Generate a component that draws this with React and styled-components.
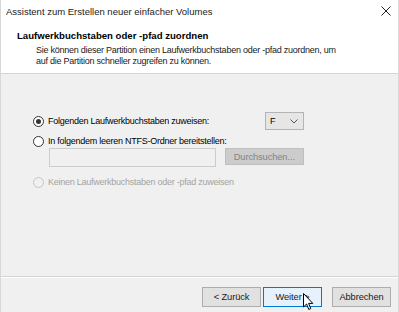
import React from 'react';
import styled, { createGlobalStyle } from 'styled-components';

const GlobalStyle = createGlobalStyle`
  html, body {
    margin: 0;
    padding: 0;
    background: #f0f0f0;
  }
  body {
    font-family: "Liberation Sans", Arial, sans-serif;
    font-size: 9px;
    letter-spacing: -0.25px;
    color: #000000;
  }
`;

const Window = styled.div`
  width: 399px;
  height: 312px;
  display: flex;
  flex-direction: column;
  background: #f0f0f0;
  box-sizing: border-box;
  border-left: 1px solid #d8d8d8;
  border-right: 1px solid #d8d8d8;
  position: relative;
  overflow: hidden;
`;

const TitleBar = styled.div`
  height: 22px;
  flex: none;
  display: flex;
  align-items: center;
  justify-content: space-between;
  padding: 0 7px 0 5px;
  background: #ffffff;
  font-size: 9.5px;
  letter-spacing: 0;
  color: #1a1a1a;
`;

const CloseIcon = styled.svg`
  width: 10px;
  height: 10px;
`;

const Header = styled.div`
  height: 52px;
  flex: none;
  box-sizing: border-box;
  background: #ffffff;
  padding: 8px 0 0 16px;
  border-bottom: 1px solid #d4d4d4;
`;

const HeaderTitle = styled.div`
  font-weight: bold;
  font-size: 9.6px;
  letter-spacing: 0;
  line-height: 12px;
`;

const HeaderText = styled.div`
  padding-left: 19px;
  margin-top: 3px;
  line-height: 10.5px;
  font-size: 9px;
  letter-spacing: -0.25px;
  color: #1a1a1a;
`;

const Content = styled.div`
  flex: 1;
  display: flex;
  flex-direction: column;
  padding: 38px 94px 0 32px;
  border-bottom: 1px solid #d4d4d4;
  box-shadow: 0 1px 0 #ffffff;
`;

const OptionRow = styled.div`
  display: flex;
  align-items: center;
  height: ${p => p.$h || 14}px;
  margin-top: ${p => p.$mt || 0}px;
  color: ${p => (p.$disabled ? '#a3a3a3' : '#000000')};
`;

const Radio = styled.span`
  width: 9px;
  height: 9px;
  border-radius: 50%;
  border: 1px solid ${p => (p.$disabled ? '#c4c4c4' : '#333333')};
  background: ${p => (p.$disabled ? '#f0f0f0' : '#ffffff')};
  display: flex;
  align-items: center;
  justify-content: center;
  margin-right: 4px;
  flex: none;

  &::after {
    content: '';
    width: 5px;
    height: 5px;
    border-radius: 50%;
    background: #333333;
    display: ${p => (p.$checked ? 'block' : 'none')};
  }
`;

const Select = styled.div`
  margin-left: auto;
  width: 39px;
  height: 18px;
  box-sizing: border-box;
  border: 1px solid #b4b4b4;
  background: #e6e6e6;
  display: flex;
  align-items: center;
  justify-content: space-between;
  padding: 0 5px 0 4px;
`;

const PathRow = styled.div`
  display: flex;
  align-items: flex-start;
  padding-left: 16px;
  gap: 9px;
  height: 19px;
`;

const PathInput = styled.div`
  width: 168px;
  height: 19px;
  box-sizing: border-box;
  border: 1px solid #cccccc;
  background: #f0f0f0;
`;

const Button = styled.div`
  width: ${p => p.$w || 59}px;
  height: ${p => p.$hgt || 20}px;
  box-sizing: border-box;
  display: flex;
  align-items: center;
  justify-content: center;
  border: 1px solid ${p => (p.$primary ? '#0078d7' : p.$disabled ? '#bfbfbf' : '#adadad')};
  background: ${p => (p.$primary ? '#e5f1fb' : p.$disabled ? '#cccccc' : '#e1e1e1')};
  color: ${p => (p.$disabled ? '#838383' : '#1a1a1a')};
  font-size: 9.3px;
  letter-spacing: -0.1px;
`;

const Footer = styled.div`
  height: 34px;
  flex: none;
  box-sizing: border-box;
  margin-top: 1px;
  display: flex;
  justify-content: flex-end;
  align-items: flex-start;
  padding: 9px 7px 0 0;
`;

const ButtonPair = styled.div`
  display: flex;
  gap: 2px;
  margin-right: 10px;
`;

const Cursor = styled.svg`
  position: absolute;
  left: 302px;
  top: 293px;
  width: 11px;
  height: 18px;
`;

export default function App() {
  return (
    <>
      <GlobalStyle />
      <Window>
        <TitleBar>
          <span>Assistent zum Erstellen neuer einfacher Volumes</span>
          <CloseIcon viewBox="0 0 10 10">
            <path d="M0.5 0.5 L9.5 9.5 M9.5 0.5 L0.5 9.5" stroke="#222" strokeWidth="1" />
          </CloseIcon>
        </TitleBar>
        <Header>
          <HeaderTitle>Laufwerkbuchstaben oder -pfad zuordnen</HeaderTitle>
          <HeaderText>
            Sie können dieser Partition einen Laufwerkbuchstaben oder -pfad zuordnen, um
            <br />
            auf die Partition schneller zugreifen zu können.
          </HeaderText>
        </Header>
        <Content>
          <OptionRow $h={18}>
            <Radio $checked />
            <span>Folgenden Laufwerkbuchstaben zuweisen:</span>
            <Select>
              <span>F</span>
              <svg width="8" height="5" viewBox="0 0 8 5">
                <path d="M0.5 0.5 L4 4 L7.5 0.5" fill="none" stroke="#555" strokeWidth="1" />
              </svg>
            </Select>
          </OptionRow>
          <OptionRow $mt={4}>
            <Radio />
            <span>In folgendem leeren NTFS-Ordner bereitstellen:</span>
          </OptionRow>
          <PathRow>
            <PathInput />
            <Button $w={80} $hgt={17} $disabled>Durchsuchen...</Button>
          </PathRow>
          <OptionRow $mt={8} $disabled>
            <Radio $disabled />
            <span>Keinen Laufwerkbuchstaben oder -pfad zuweisen</span>
          </OptionRow>
        </Content>
        <Footer>
          <ButtonPair>
            <Button>&lt; Zurück</Button>
            <Button $primary>Weiter &gt;</Button>
          </ButtonPair>
          <Button>Abbrechen</Button>
        </Footer>
        <Cursor viewBox="0 0 11 18">
          <path
            d="M0.5 0.5 L0.5 14 L3.6 11 L5.8 16.5 L7.8 15.6 L5.6 10.4 L9.8 10.4 Z"
            fill="#ffffff"
            stroke="#000000"
            strokeWidth="1"
            strokeLinejoin="round"
          />
        </Cursor>
      </Window>
    </>
  );
}
